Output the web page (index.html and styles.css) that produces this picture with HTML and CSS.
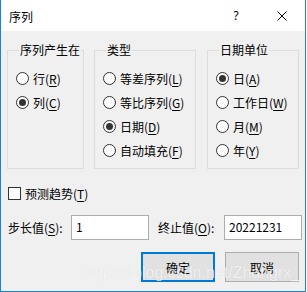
FILE: index.html
```html
<!DOCTYPE html>
<html lang="zh-CN">
<head>
  <meta charset="UTF-8">
  <title>序列</title>
  <link rel="stylesheet" href="styles.css">
</head>
<body>
  <div class="dialog">
    <div class="titlebar">
      <span class="title">序列</span>
      <span class="help">?</span>
      <span class="close">
        <svg width="10" height="10" viewBox="0 0 10 10"><path d="M0.5 0.5 L9.5 9.5 M9.5 0.5 L0.5 9.5" stroke="#000" stroke-width="1" fill="none"/></svg>
      </span>
    </div>

    <div class="content">
      <div class="groups">
        <fieldset class="group g-place">
          <legend>序列产生在</legend>
          <label class="radio"><span class="dot"></span>行(<u>R</u>)</label>
          <label class="radio on"><span class="dot"></span>列(<u>C</u>)</label>
        </fieldset>
        <fieldset class="group g-type">
          <legend>类型</legend>
          <label class="radio"><span class="dot"></span>等差序列(<u>L</u>)</label>
          <label class="radio"><span class="dot"></span>等比序列(<u>G</u>)</label>
          <label class="radio on"><span class="dot"></span>日期(<u>D</u>)</label>
          <label class="radio"><span class="dot"></span>自动填充(<u>F</u>)</label>
        </fieldset>
        <fieldset class="group g-unit">
          <legend>日期单位</legend>
          <label class="radio on"><span class="dot"></span>日(<u>A</u>)</label>
          <label class="radio"><span class="dot"></span>工作日(<u>W</u>)</label>
          <label class="radio"><span class="dot"></span>月(<u>M</u>)</label>
          <label class="radio"><span class="dot"></span>年(<u>Y</u>)</label>
        </fieldset>
      </div>

      <label class="check"><span class="box"></span>预测趋势(<u>T</u>)</label>

      <div class="fields">
        <span class="lbl">步长值(<u>S</u>):</span>
        <div class="input">1</div>
        <span class="lbl stop">终止值(<u>O</u>):</span>
        <div class="input">20221231</div>
      </div>

      <div class="buttons">
        <div class="btn default">确定</div>
        <div class="btn">取消</div>
      </div>
    </div>

    <div class="watermark">https://blog.csdn.net/Zhangrx_</div>
  </div>
</body>
</html>
```

FILE: styles.css
```css
* { box-sizing: border-box; margin: 0; padding: 0; }
body {
  background: #fff;
  font-family: "Microsoft YaHei UI", "Noto Sans CJK SC", sans-serif;
  font-size: 12px;
  color: #000;
}
u { text-decoration: underline; text-underline-offset: 2px; }

.dialog {
  position: relative;
  width: 306px;
  height: 292px;
  background: #f0f0f0;
  border: 1px solid #1883d7;
  border-top: none;
  overflow: hidden;
}

.titlebar {
  height: 31px;
  background: #fff;
  display: flex;
  align-items: center;
  padding-left: 8px;
}
.title {
  flex: 1;
  margin-top: 1px;
}
.help {
  font-family: "Noto Sans", sans-serif;
  width: 46px;
  text-align: center;
}
.close {
  width: 46px;
  display: flex;
  justify-content: center;
}

.content {
  padding: 11px 6px 0 6px;
}
.groups {
  display: flex;
}
.group {
  border: 1px solid #dcdcdc;
  height: 127px;
  padding: 8px 0 0 8px;
  display: flex;
  flex-direction: column;
}
.group legend {
  margin-left: 3px;
  padding: 0 1px;
  line-height: 16px;
}
.g-place { width: 77px; margin-right: 10px; }
.g-type { width: 102px; margin-right: 11px; }
.g-unit { width: 92px; }

.radio {
  display: flex;
  align-items: center;
  height: 24px;
  white-space: nowrap;
}
.radio .dot {
  width: 13px;
  height: 13px;
  border: 1px solid #333;
  border-radius: 50%;
  background: #fff;
  margin-right: 4px;
  display: flex;
  align-items: center;
  justify-content: center;
  flex-shrink: 0;
}
.radio.on .dot::after {
  content: "";
  width: 7px;
  height: 7px;
  border-radius: 50%;
  background: #333;
}

.check {
  display: flex;
  align-items: center;
  height: 24px;
  margin-top: 12px;
  padding-left: 1px;
}
.check .box {
  width: 13px;
  height: 13px;
  border: 1px solid #333;
  background: #fff;
  margin-right: 4px;
}

.fields {
  display: flex;
  align-items: center;
  margin-top: 10px;
  padding-left: 1px;
  white-space: nowrap;
}
.lbl { width: 63px; flex-shrink: 0; }
.lbl.stop { width: 66px; margin-left: 9px; }
.input {
  width: 78px;
  height: 25px;
  flex-shrink: 0;
  background: #fff;
  border: 1px solid #adadad;
  padding-left: 4px;
  line-height: 22px;
}

.buttons {
  display: flex;
  justify-content: flex-end;
  gap: 10px;
  margin-top: 12px;
}
.btn {
  width: 74px;
  height: 30px;
  background: #e1e1e1;
  border: 1px solid #adadad;
  display: flex;
  align-items: center;
  justify-content: center;
}
.btn.default { border: 2px solid #0078d7; }

.watermark {
  position: absolute;
  left: 84px;
  top: 264px;
  font-family: "Liberation Sans", Arial, sans-serif;
  font-size: 16px;
  color: rgba(255, 255, 255, 0.75);
  text-shadow: 0 0 1px rgba(0, 0, 0, 0.12);
  white-space: nowrap;
  pointer-events: none;
}
```
